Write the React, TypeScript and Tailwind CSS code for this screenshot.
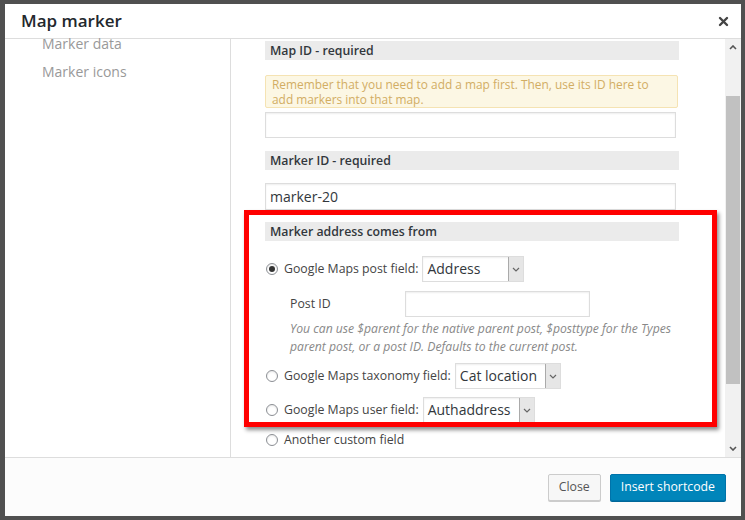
import React from 'react';

const Header: React.FC<{ label: string; className?: string }> = ({ label, className }) => (
  <div className={`h-[19px] w-[414px] bg-[#ebebeb] pl-[5px] text-[12.3px] font-semibold leading-[19px] text-[#32373c] ${className ?? ''}`}>
    {label}
  </div>
);

const Radio: React.FC<{ checked?: boolean }> = ({ checked }) => (
  <span className="flex h-[12px] w-[12px] shrink-0 items-center justify-center rounded-full border border-[#8c8f94] bg-white shadow-[inset_0_1px_2px_rgba(0,0,0,0.1)]">
    {checked && <span className="h-[6px] w-[6px] rounded-full bg-[#333]" />}
  </span>
);

const Select: React.FC<{ value: string; width: string }> = ({ value, width }) => (
  <div className={`flex h-[26px] items-stretch border border-[#ddd] bg-white shadow-[inset_0_1px_2px_rgba(0,0,0,0.07)] ${width}`}>
    <span className="flex-1 truncate pl-[4px] text-[14px] leading-[24px] text-[#32373c]">{value}</span>
    <span className="flex w-[15px] items-center justify-center border-l border-[#aaa] bg-[#e6e6e6] text-[#666]">
      <svg width="8" height="5" viewBox="0 0 8 5" fill="none" stroke="currentColor" strokeWidth="1.2">
        <path d="M1 1l3 3 3-3" />
      </svg>
    </span>
  </div>
);

const RadioRow: React.FC<{ label: string; checked?: boolean; children?: React.ReactNode; className?: string }> = ({
  label,
  checked,
  children,
  className,
}) => (
  <div className={`flex min-h-[18px] items-center ${className ?? ''}`}>
    <Radio checked={checked} />
    <span className="ml-[6px] mr-[4px] text-[12.3px] text-[#444]">{label}</span>
    {children}
  </div>
);

export default function App() {
  return (
    <div
      className="h-[520px] w-[745px] overflow-hidden bg-[#505050] pl-[5px] pt-[4px]"
      style={{ fontFamily: '"Open Sans", "Liberation Sans", sans-serif' }}
    >
      <div className="flex h-[512px] w-[736px] flex-col bg-white">
        {/* Title bar */}
        <div className="flex h-[35px] shrink-0 items-center justify-between border-b border-[#dddddd] pl-[16px] pr-[12px]">
          <span className="text-[17px] font-semibold text-[#23282d]">Map marker</span>
          <svg width="11" height="11" viewBox="0 0 11 11" stroke="#444" strokeWidth="2.4" strokeLinecap="round">
            <path d="M2 2l7 7M9 2l-7 7" />
          </svg>
        </div>

        {/* Body */}
        <div className="flex h-[418px] shrink-0">
          <div className="w-[226px] shrink-0 border-r border-[#ddd] pl-[37px]">
            <div className="text-[14px] leading-[10px] text-[#999]">Marker data</div>
            <div className="mt-[18px] text-[14px] leading-[10px] text-[#999]">Marker icons</div>
          </div>

          <div className="relative flex flex-1">
            <div className="flex-1 overflow-hidden pl-[34px] pt-[2px]">
              <Header label="Map ID - required" />
              <div className="mt-[15px] w-[413px] rounded-[2px] border border-[#f5e3b3] bg-[#fcf7e4] px-[6px] pt-[1px] text-[11.9px] leading-[15px] text-[#d2ad63]">
                Remember that you need to add a map first. Then, use its ID here to
                <br />
                add markers into that map.
              </div>
              <div className="mt-[4px] h-[26px] w-[411px] border border-[#ddd] bg-white shadow-[inset_0_1px_2px_rgba(0,0,0,0.07)]" />
              <Header label="Marker ID - required" className="mt-[13px]" />
              <div className="mt-[13px] flex h-[27px] w-[411px] items-center border border-[#ddd] bg-white pl-[4px] text-[14px] text-[#32373c] shadow-[inset_0_1px_2px_rgba(0,0,0,0.07)]">
                marker-20
              </div>
              <Header label="Marker address comes from" className="mt-[12px]" />

              <RadioRow label="Google Maps post field:" checked className="mt-[15px] pl-[1px]">
                <Select value="Address" width="w-[102px]" />
              </RadioRow>
              <div className="ml-[25px] mt-[9px] flex items-center">
                <span className="w-[115px] text-[12.3px] text-[#444]">Post ID</span>
                <div className="h-[26px] w-[185px] border border-[#ddd] bg-white shadow-[inset_0_1px_2px_rgba(0,0,0,0.07)]" />
              </div>
              <div className="ml-[25px] mt-[3px] w-[400px] text-[12.2px] italic leading-[18px] text-[#888]">
                You can use $parent for the native parent post, $posttype for the Types parent post, or a post ID. Defaults to the current post.
              </div>
              <RadioRow label="Google Maps taxonomy field:" className="mt-[7px] pl-[1px]">
                <Select value="Cat location" width="w-[106px]" />
              </RadioRow>
              <RadioRow label="Google Maps user field:" className="mt-[8px] pl-[1px]">
                <Select value="Authaddress" width="w-[112px]" />
              </RadioRow>
              <RadioRow label="Another custom field" className="mt-[8px] pl-[1px]" />
              <RadioRow label="" className="mt-[5px] pl-[1px]" />
            </div>

            {/* Scrollbar */}
            <div className="flex w-[16px] shrink-0 flex-col items-center bg-[#f1f1f1]">
              <svg className="mt-[6px]" width="8" height="5" viewBox="0 0 8 5" fill="none" stroke="#555" strokeWidth="1.6">
                <path d="M1 4l3-3 3 3" />
              </svg>
              <div className="mt-[46px] h-[288px] w-[14px] bg-[#c1c1c1]" />
              <div className="flex-1" />
              <svg className="mb-[6px]" width="8" height="5" viewBox="0 0 8 5" fill="none" stroke="#555" strokeWidth="1.6">
                <path d="M1 1l3 3 3-3" />
              </svg>
            </div>

            {/* Red annotation box */}
            <div className="pointer-events-none absolute left-[13px] top-[171px] h-[217px] w-[473px] border-[5px] border-[#ff0000] shadow-[2px_3px_4px_rgba(0,0,0,0.45)]" />
          </div>
        </div>

        {/* Footer */}
        <div className="flex flex-1 items-center justify-end gap-[9px] border-t border-[#ddd] bg-[#fcfcfc] pr-[15px]">
          <button className="h-[27px] rounded-[2px] border border-[#ccc] bg-[#f7f7f7] px-[10px] text-[12.3px] text-[#555] shadow-[0_1px_0_#ccc]">
            Close
          </button>
          <button className="h-[27px] rounded-[2px] border border-[#0073aa] bg-[#0085ba] px-[10px] text-[12.3px] text-white shadow-[0_1px_0_#006799]">
            Insert shortcode
          </button>
        </div>
      </div>
    </div>
  );
}
